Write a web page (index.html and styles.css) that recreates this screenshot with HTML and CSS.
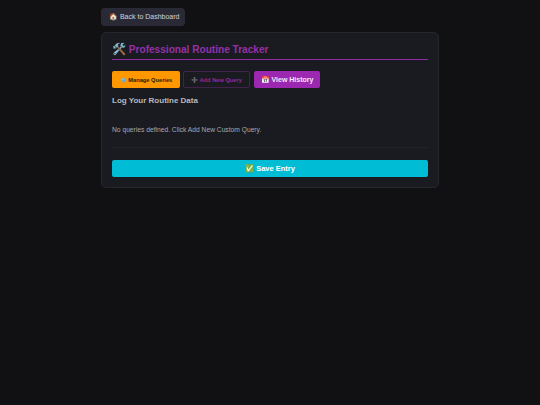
FILE: index.html
```html
<!DOCTYPE html>
<html lang="en">
<head>
<meta charset="utf-8">
<title>Professional Routine Tracker</title>
<link rel="stylesheet" href="styles.css">
</head>
<body>
<main class="page">
  <a class="back" href="#">🏠 Back to Dashboard</a>
  <section class="card">
    <h1 class="title"><span class="title-icon">🛠️</span> Professional Routine Tracker</h1>
    <div class="tabs">
      <button class="tab tab-orange">⚙️ Manage Queries</button>
      <button class="tab tab-outline"><span class="plus">➕</span> Add New Query</button>
      <button class="tab tab-purple">📅 View History</button>
    </div>
    <h2 class="subtitle">Log Your Routine Data</h2>
    <p class="empty">No queries defined. Click Add New Custom Query.</p>
    <hr class="rule">
    <button class="save">✅ Save Entry</button>
  </section>
</main>
</body>
</html>
```
FILE: styles.css
```css
* { box-sizing: border-box; }
html, body { margin: 0; height: 100%; }
body {
  background: #111113;
  color: #c9c9cf;
  font-family: "Liberation Sans", Arial, sans-serif;
}
.page { width: 338px; margin: 0 auto; padding-top: 8px; }
.back {
  display: flex;
  align-items: center;
  width: 84px;
  height: 18px;
  padding: 0 8px;
  border-radius: 4px;
  background: #2a2a36;
  color: #d4d4da;
  font-size: 7px;
  white-space: nowrap;
  text-decoration: none;
}
.card {
  margin-top: 6px;
  height: 156px;
  padding: 9px 10px;
  background: #1a1b20;
  border: 1px solid #26272d;
  border-radius: 5px;
}
.title {
  margin: 0;
  height: 18px;
  border-bottom: 1px solid #8f2ba3;
  color: #9530a8;
  font-size: 10.1px;
  font-weight: 700;
  line-height: 14px;
  white-space: nowrap;
}
.title-icon { font-size: 11.5px; }
.tabs { display: flex; gap: 3px; margin-top: 11px; }
.tab {
  height: 17px;
  padding: 0 2px;
  border-radius: 2px;
  border: 1px solid transparent;
  font-family: inherit;
  font-weight: 700;
  font-size: 5.7px;
  white-space: nowrap;
}
.tab-orange { width: 68px; background: #ff9800; color: #2a1c00; }
.tab-outline { width: 67px; margin-right: 1px; background: transparent; border-color: #43214d; color: #8e2aa3; }
.plus { color: #888; }
.tab-purple { width: 66px; background: #9c27b0; color: #f4e8f6; font-size: 7px; }
.subtitle { margin: 8px 0 0; color: #b8b8be; font-size: 8px; font-weight: 700; line-height: 10px; }
.empty { margin: 20px 0 0; color: #a8a8ae; font-size: 6.7px; line-height: 8px; }
.rule { margin: 13px 0 0; border: 0; border-top: 1px solid #222329; }
.save {
  display: block;
  width: 100%;
  height: 17px;
  margin-top: 12px;
  border: 0;
  border-radius: 2px;
  background: #00bcd4;
  color: #fff;
  font-family: inherit;
  font-size: 7.5px;
  font-weight: 700;
}
```
